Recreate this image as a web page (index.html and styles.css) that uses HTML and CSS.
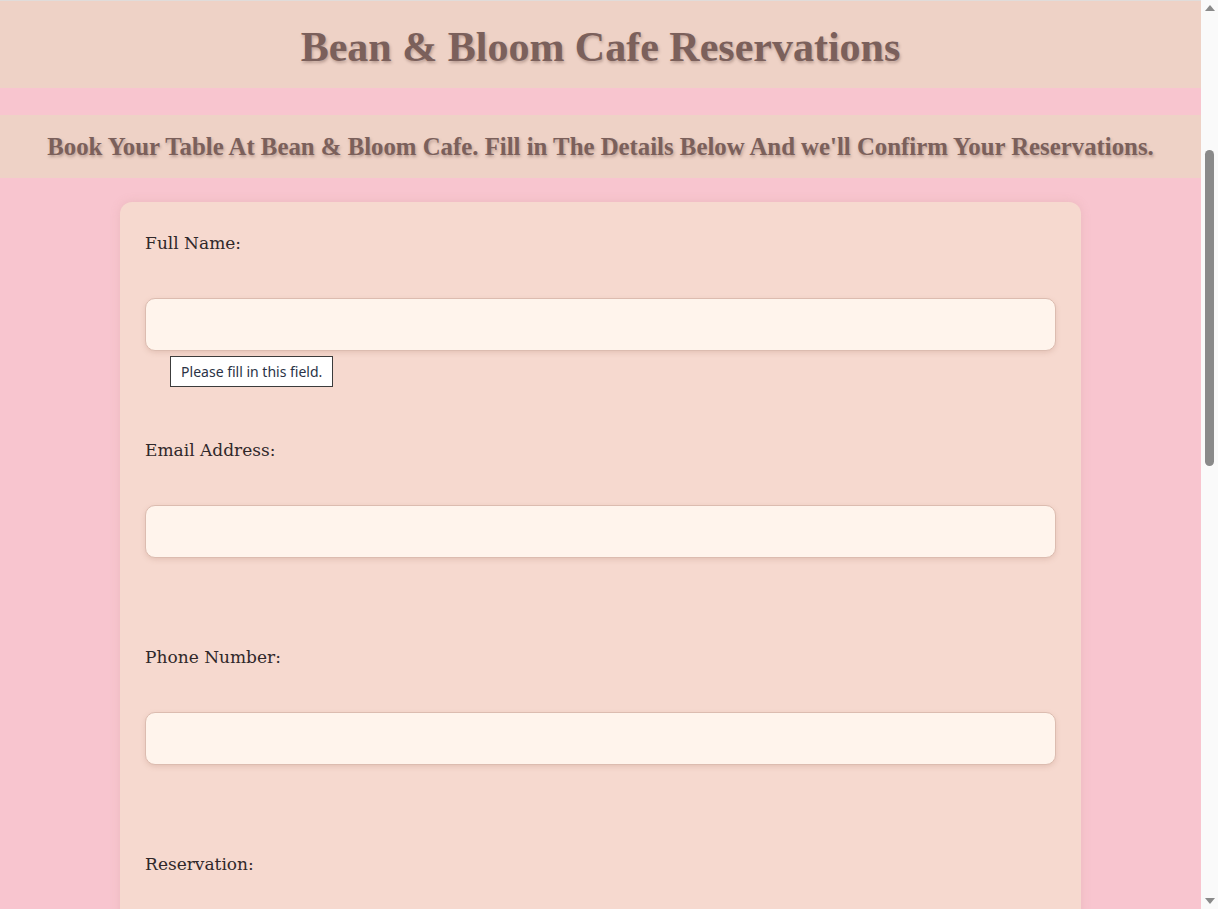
FILE: index.html
```html
<!DOCTYPE html>
<html lang="en">
<head>
<meta charset="utf-8">
<title>Bean &amp; Bloom Cafe Reservations</title>
<link rel="stylesheet" href="styles.css">
</head>
<body>
<div class="page">
  <header class="site-header">
    <h1 class="title">Bean &amp; Bloom Cafe Reservations</h1>
  </header>
  <section class="intro">
    <p class="intro-text">Book Your Table At Bean &amp; Bloom Cafe. Fill in The Details Below And we'll Confirm Your Reservations.</p>
  </section>
  <form class="card">
    <div class="field">
      <label class="label" for="name">Full Name:</label>
      <div class="input-wrap">
        <input class="input" id="name" type="text">
        <div class="tooltip">Please fill in this field.</div>
      </div>
    </div>
    <div class="field">
      <label class="label" for="email">Email Address:</label>
      <div class="input-wrap"><input class="input" id="email" type="email"></div>
    </div>
    <div class="field">
      <label class="label" for="phone">Phone Number:</label>
      <div class="input-wrap"><input class="input" id="phone" type="tel"></div>
    </div>
    <div class="field">
      <label class="label" for="res">Reservation:</label>
      <div class="input-wrap"><input class="input" id="res" type="text"></div>
    </div>
  </form>
</div>
<div class="scrollbar" aria-hidden="true">
  <span class="arrow arrow-up"></span>
  <span class="thumb"></span>
  <span class="arrow arrow-down"></span>
</div>
</body>
</html>
```
FILE: styles.css
```css
html, body {
  margin: 0;
  padding: 0;
}
body {
  background: #f8c5cf;
  font-family: "Liberation Serif", serif;
}
.page {
  margin-right: 17px;
}
.site-header {
  background: #eed2c6;
  border-top: 1px solid #e0dcda;
  height: 88px;
  padding-top: 4px;
  box-sizing: border-box;
  display: flex;
  align-items: center;
  justify-content: center;
}
.title {
  margin: 0;
  font-family: "Liberation Serif", serif;
  font-weight: bold;
  font-size: 42px;
  color: #7b605b;
  text-shadow: 1px 2px 3px rgba(90, 60, 55, 0.35);
}
.intro {
  margin-top: 27px;
  background: #eed2c6;
  height: 63px;
  display: flex;
  align-items: center;
  justify-content: center;
}
.intro-text {
  margin: 0;
  font-family: "Liberation Serif", serif;
  font-weight: bold;
  font-size: 24.8px;
  color: #7b605b;
  text-shadow: 1px 2px 3px rgba(90, 60, 55, 0.35);
}
.card {
  width: 80%;
  margin: 24px auto 0;
  background: #f6d9cf;
  border-radius: 12px;
  padding: 26px 25px 0;
  box-sizing: border-box;
  box-shadow: 0 0 10px rgba(200, 150, 140, 0.25);
}
.field {
  display: flex;
  flex-direction: column;
  padding-bottom: 84px;
}
.label {
  font-family: "DejaVu Serif", serif;
  font-size: 17px;
  line-height: 30px;
  color: #30282a;
}
.input-wrap {
  position: relative;
  margin-top: 40px;
}
.input {
  display: block;
  width: 100%;
  box-sizing: border-box;
  height: 53px;
  border: 1px solid #dcbcb0;
  border-radius: 10px;
  background: #fff4ec;
  box-shadow: 0 2px 5px rgba(180, 130, 115, 0.25);
  outline: none;
}
.tooltip {
  position: absolute;
  left: 25px;
  top: 58px;
  background: #fff;
  border: 1px solid #3c3c3c;
  padding: 0 10px;
  height: 29px;
  line-height: 29px;
  font-family: "Noto Sans", sans-serif;
  font-size: 14px;
  color: #2b3346;
  white-space: nowrap;
}
.scrollbar {
  position: fixed;
  top: 0;
  right: 0;
  bottom: 0;
  width: 17px;
  background: #fafafa;
}
.thumb {
  position: absolute;
  left: 4px;
  width: 9px;
  top: 150px;
  height: 316px;
  border-radius: 5px;
  background: #8a8a8a;
}
.arrow {
  position: absolute;
  left: 4px;
  width: 0;
  height: 0;
  border-left: 5px solid transparent;
  border-right: 5px solid transparent;
}
.arrow-up {
  top: 5px;
  border-bottom: 6px solid #8a8a8a;
}
.arrow-down {
  bottom: 5px;
  border-top: 6px solid #8a8a8a;
}
```
